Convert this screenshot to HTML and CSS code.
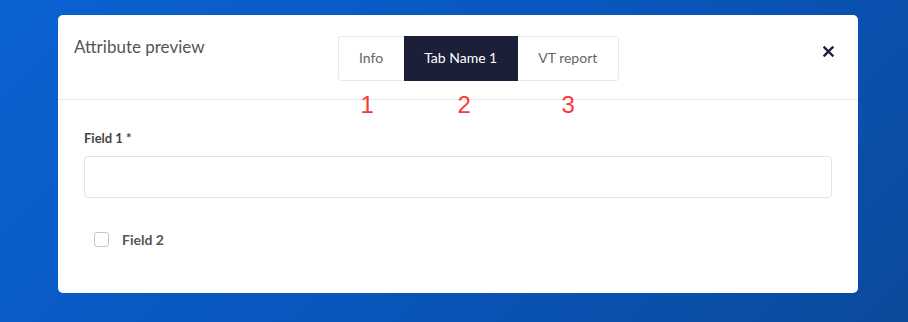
FILE: index.html
```html
<!DOCTYPE html>
<html lang="en">
<head>
<meta charset="UTF-8">
<meta name="viewport" content="width=device-width, initial-scale=1.0">
<title>Attribute preview</title>
<link rel="stylesheet" href="styles.css">
</head>
<body>

<div class="modal">
    <div class="modal-header">
        <h3 class="modal-title">Attribute preview</h3>
        <div class="tabs">
            <div class="tab">Info<span class="marker marker-1">1</span></div>
            <div class="tab active">Tab Name 1<span class="marker marker-2">2</span></div>
            <div class="tab">VT report<span class="marker marker-3">3</span></div>
        </div>
        <button class="close" type="button">
            <svg width="11" height="11" viewBox="0 0 11 11"><path d="M1.5 1.5 L9.5 9.5 M9.5 1.5 L1.5 9.5" stroke="#1b1f38" stroke-width="2.4" stroke-linecap="square"/></svg>
        </button>
    </div>
    <div class="modal-body">
        <label class="field-label" for="field1">Field 1 *</label>
        <input class="field-input" type="text" id="field1">
        <label class="check">
            <span class="check-box"></span>
            <span class="check-label">Field 2</span>
        </label>
    </div>
</div>

</body>
</html>
```

FILE: styles.css
```css
body {
    margin: 0;
    padding: 15px 50px 29px 58px;
    font-family: Lato, "Open Sans", sans-serif;
    background: linear-gradient(135deg, #0b62d2 0%, #0956bd 50%, #0a4a9c 100%);
    min-height: 322px;
    box-sizing: border-box;
}
.modal {
    width: 800px;
    height: 278px;
    background: #fff;
    border-radius: 5px;
}
.modal-header {
    position: relative;
    display: flex;
    align-items: flex-start;
    height: 85px;
    padding: 21px 0 0 16px;
    border-bottom: 1px solid #e6e6e6;
    box-sizing: border-box;
}
.modal-title {
    margin: 0;
    font-size: 17px;
    font-weight: 400;
    line-height: 22px;
    color: #555;
    width: 264px;
}
.tabs {
    display: flex;
    height: 43px;
    border: 1px solid #e8e8e8;
    border-radius: 3px;
}
.tab {
    position: relative;
    padding: 0 21px 0 20px;
    line-height: 41px;
    font-size: 14px;
    color: #666;
}
.tab.active {
    background: #1b1f38;
    color: #fff;
    margin: -1px 0;
    line-height: 43px;
}
.marker {
    position: absolute;
    left: 0;
    right: 0;
    top: 55px;
    text-align: center;
    font-family: "Liberation Sans", Arial, sans-serif;
    font-size: 24px;
    line-height: 26px;
    color: #f63a3a;
}
.marker-1 {
    left: -9px;
}
.marker-2 {
    top: 56px;
    left: 6px;
}
.close {
    margin: 10px 0 0 auto;
    margin-right: 24px;
    padding: 0;
    border: none;
    background: none;
    cursor: pointer;
    line-height: 0;
}
.modal-body {
    padding: 30px 26px 0 26px;
}
.field-label {
    display: block;
    font-size: 13px;
    font-weight: 700;
    color: #444;
    line-height: 16px;
}
.field-input {
    display: block;
    width: 100%;
    height: 42px;
    margin-top: 10px;
    border: 1px solid #e3e3e8;
    border-radius: 4px;
    box-sizing: border-box;
}
.check {
    display: flex;
    align-items: center;
    margin: 33px 0 0 10px;
}
.check-box {
    width: 13px;
    height: 13px;
    border: 1px solid #c4c4c4;
    border-radius: 3px;
}
.check-label {
    margin-left: 13px;
    font-size: 14px;
    font-weight: 700;
    color: #555;
}
```
